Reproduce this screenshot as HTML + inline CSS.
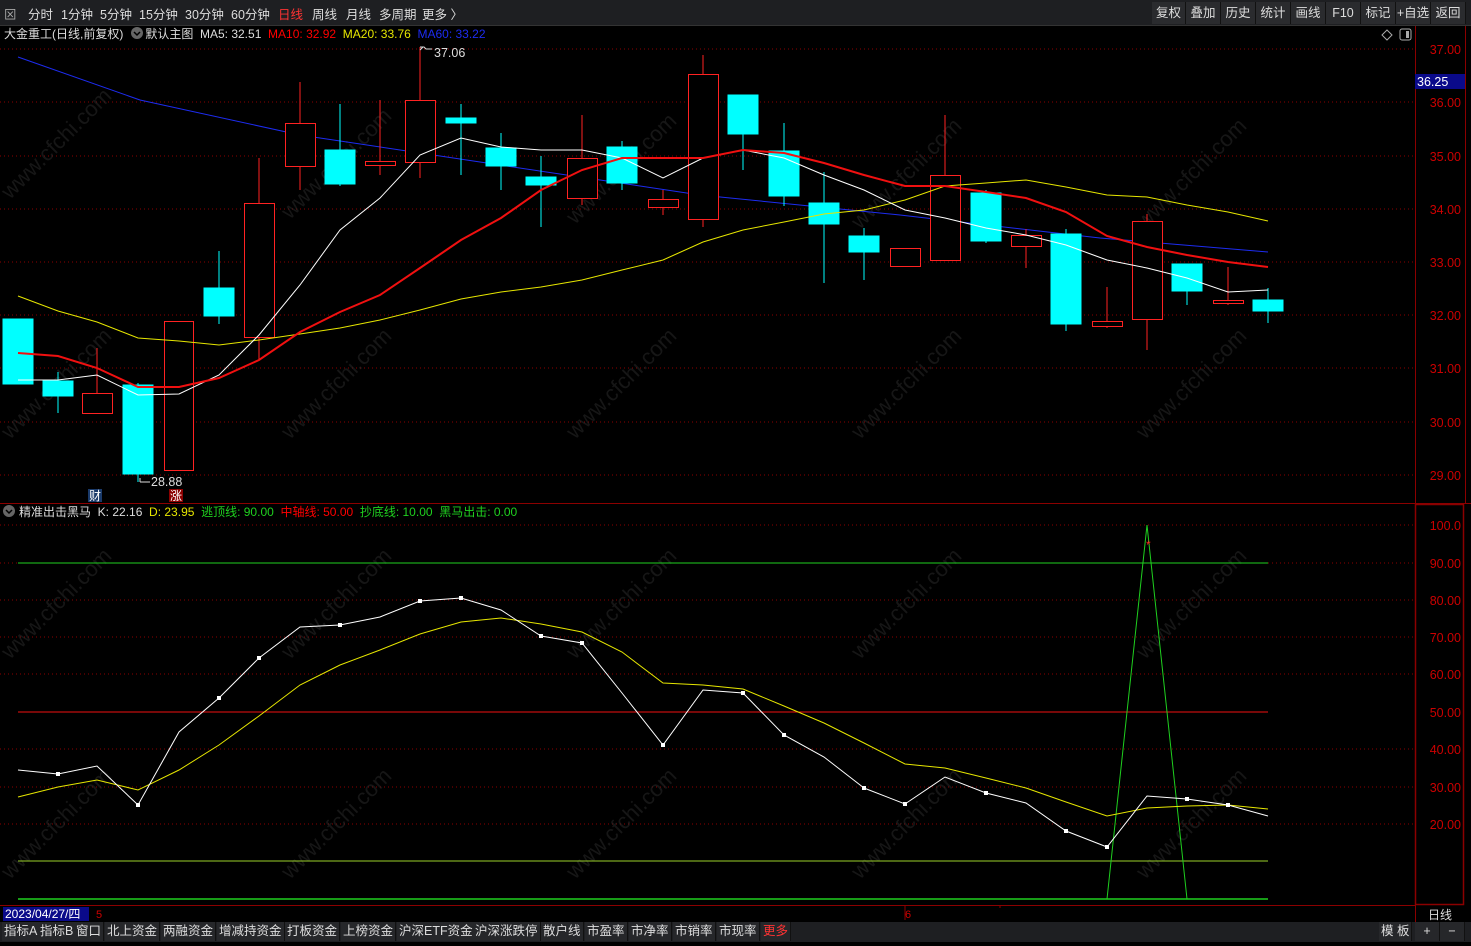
<!DOCTYPE html>
<html><head><meta charset="utf-8"><style>
*{margin:0;padding:0;box-sizing:border-box}
body{width:1471px;height:946px;background:#000;overflow:hidden;font-family:"Liberation Sans","Noto Sans CJK SC",sans-serif;font-size:12px;color:#ddd;position:relative}
.top{position:absolute;left:0;top:0;width:1471px;height:26px;background:#1e1f22;border-bottom:1px solid #333}
.top span{position:absolute;top:4px;font-size:12.5px;color:#ddd}
.rb{position:absolute;top:2px;height:22px;background:#2a2b2e;border-right:1px solid #111;color:#ddd;font-size:12.5px;line-height:22px;text-align:center}
.bot{position:absolute;left:0;top:922px;width:1471px;height:20px;background:#1e1f22}
.bot span{position:absolute;top:0;height:19px;line-height:19px;background:#26272a;font-size:12.5px;color:#ddd;padding:0 2px;border-right:1px solid #111}
svg{position:absolute;left:0;top:0}
</style></head><body>
<div class="top">
<span style="left:4px;color:#aaa">⊠</span>
<span style="left:28px">分时</span><span style="left:61px">1分钟</span><span style="left:100px">5分钟</span><span style="left:139px">15分钟</span><span style="left:185px">30分钟</span><span style="left:231px">60分钟</span><span style="left:278px;color:#f33">日线</span><span style="left:312px">周线</span><span style="left:346px">月线</span><span style="left:379px">多周期</span><span style="left:422px">更多 〉</span>
<div class="rb" style="left:1152px;width:34px">复权</div><div class="rb" style="left:1186px;width:35px">叠加</div><div class="rb" style="left:1221px;width:35px">历史</div><div class="rb" style="left:1256px;width:35px">统计</div><div class="rb" style="left:1291px;width:35px">画线</div><div class="rb" style="left:1326px;width:35px">F10</div><div class="rb" style="left:1361px;width:35px">标记</div><div class="rb" style="left:1396px;width:35px">+自选</div><div class="rb" style="left:1431px;width:35px">返回</div>
</div>
<svg width="1471" height="946" style="top:0">
<g stroke="#8b0000" stroke-width="1" stroke-dasharray="1,3">
<line x1="0" y1="49" x2="1415" y2="49"/><line x1="0" y1="102" x2="1415" y2="102"/><line x1="0" y1="156" x2="1415" y2="156"/><line x1="0" y1="209" x2="1415" y2="209"/><line x1="0" y1="262" x2="1415" y2="262"/><line x1="0" y1="315" x2="1415" y2="315"/><line x1="0" y1="368" x2="1415" y2="368"/><line x1="0" y1="422" x2="1415" y2="422"/><line x1="0" y1="475" x2="1415" y2="475"/>
<line x1="0" y1="525" x2="1415" y2="525"/><line x1="0" y1="563" x2="1415" y2="563"/><line x1="0" y1="600" x2="1415" y2="600"/><line x1="0" y1="637" x2="1415" y2="637"/><line x1="0" y1="674" x2="1415" y2="674"/><line x1="0" y1="749" x2="1415" y2="749"/><line x1="0" y1="787" x2="1415" y2="787"/><line x1="0" y1="824" x2="1415" y2="824"/>
</g>
<g fill="#333" font-size="22" opacity="0.45">
<text transform="translate(10,200) rotate(-45)">www.cfchi.com</text><text transform="translate(290,220) rotate(-45)">www.cfchi.com</text><text transform="translate(575,225) rotate(-45)">www.cfchi.com</text><text transform="translate(860,230) rotate(-45)">www.cfchi.com</text><text transform="translate(1145,230) rotate(-45)">www.cfchi.com</text>
<text transform="translate(10,440) rotate(-45)">www.cfchi.com</text><text transform="translate(290,440) rotate(-45)">www.cfchi.com</text><text transform="translate(575,440) rotate(-45)">www.cfchi.com</text><text transform="translate(860,440) rotate(-45)">www.cfchi.com</text><text transform="translate(1145,440) rotate(-45)">www.cfchi.com</text>
<text transform="translate(10,660) rotate(-45)">www.cfchi.com</text><text transform="translate(290,660) rotate(-45)">www.cfchi.com</text><text transform="translate(575,660) rotate(-45)">www.cfchi.com</text><text transform="translate(860,660) rotate(-45)">www.cfchi.com</text><text transform="translate(1145,660) rotate(-45)">www.cfchi.com</text>
<text transform="translate(10,880) rotate(-45)">www.cfchi.com</text><text transform="translate(290,880) rotate(-45)">www.cfchi.com</text><text transform="translate(575,880) rotate(-45)">www.cfchi.com</text><text transform="translate(860,880) rotate(-45)">www.cfchi.com</text><text transform="translate(1145,880) rotate(-45)">www.cfchi.com</text>
</g>
<polyline fill="none" stroke="#1d2cf0" stroke-width="1" points="18,57 140,100 300,135 500,165 700,195 900,215 1100,238 1268,252"/>
<g stroke="#f22" fill="#000" stroke-width="1">
<line x1="97" y1="348" x2="97" y2="393"/><rect x="82.5" y="393.5" width="30" height="20"/>
<rect x="164.5" y="321.5" width="29" height="149"/>
<line x1="259" y1="158" x2="259" y2="203"/><line x1="259" y1="337" x2="259" y2="360"/><rect x="244.5" y="203.5" width="30" height="134"/>
<line x1="300" y1="82" x2="300" y2="123"/><line x1="300" y1="166" x2="300" y2="190"/><rect x="285.5" y="123.5" width="30" height="43"/>
<line x1="380" y1="100" x2="380" y2="175"/><rect x="365.5" y="161.5" width="30" height="4"/>
<line x1="420" y1="47" x2="420" y2="100"/><line x1="420" y1="162" x2="420" y2="178"/><rect x="405.5" y="100.5" width="30" height="62"/>
<line x1="582" y1="115" x2="582" y2="158"/><line x1="582" y1="198" x2="582" y2="205"/><rect x="567.5" y="158.5" width="30" height="40"/>
<line x1="663" y1="190" x2="663" y2="215"/><rect x="648.5" y="199.5" width="30" height="8"/>
<line x1="703" y1="55" x2="703" y2="74"/><line x1="703" y1="219" x2="703" y2="227"/><rect x="688.5" y="74.5" width="30" height="145"/>
<rect x="890.5" y="248.5" width="30" height="18"/>
<line x1="945" y1="115" x2="945" y2="175"/><rect x="930.5" y="175.5" width="30" height="85"/>
<line x1="1026" y1="229" x2="1026" y2="268"/><rect x="1011.5" y="235.5" width="30" height="11"/>
<line x1="1107" y1="287" x2="1107" y2="328"/><rect x="1092.5" y="321.5" width="30" height="5"/>
<line x1="1147" y1="214" x2="1147" y2="350"/><rect x="1132.5" y="221.5" width="30" height="98"/>
<line x1="1228" y1="267" x2="1228" y2="305"/><rect x="1213.5" y="300.5" width="30" height="3"/>
</g>
<g stroke="#00ffff" fill="#00ffff" stroke-width="1">
<rect x="3" y="319" width="30" height="65"/>
<line x1="58" y1="372" x2="58" y2="413"/><rect x="43" y="381" width="30" height="15"/>
<line x1="138" y1="383" x2="138" y2="482"/><rect x="123" y="385" width="30" height="89"/>
<line x1="219" y1="251" x2="219" y2="324"/><rect x="204" y="288" width="30" height="28"/>
<line x1="340" y1="104" x2="340" y2="186"/><rect x="325" y="150" width="30" height="34"/>
<line x1="461" y1="104" x2="461" y2="175"/><rect x="446" y="118" width="30" height="5"/>
<line x1="501" y1="133" x2="501" y2="190"/><rect x="486" y="148" width="30" height="18"/>
<line x1="541" y1="156" x2="541" y2="227"/><rect x="526" y="177" width="30" height="8"/>
<line x1="622" y1="141" x2="622" y2="190"/><rect x="607" y="147" width="30" height="36"/>
<line x1="743" y1="95" x2="743" y2="170"/><rect x="728" y="95" width="30" height="39"/>
<line x1="784" y1="123" x2="784" y2="206"/><rect x="769" y="151" width="30" height="45"/>
<line x1="824" y1="172" x2="824" y2="283"/><rect x="809" y="203" width="30" height="21"/>
<line x1="864" y1="228" x2="864" y2="280"/><rect x="849" y="236" width="30" height="16"/>
<line x1="986" y1="190" x2="986" y2="243"/><rect x="971" y="193" width="30" height="48"/>
<line x1="1066" y1="229" x2="1066" y2="331"/><rect x="1051" y="234" width="30" height="90"/>
<line x1="1187" y1="264" x2="1187" y2="305"/><rect x="1172" y="264" width="30" height="27"/>
<line x1="1268" y1="288" x2="1268" y2="323"/><rect x="1253" y="300" width="30" height="11"/>
</g>
<polyline fill="none" stroke="#e6e600" stroke-width="1" points="18,296 58,311 97,322 138,338 179,341 219,345 259,340 300,334 340,328 380,320 420,310 461,299 501,292 541,287 582,280 622,270 663,260 703,242 743,230 784,222 824,214 864,210 905,200 945,186 986,183 1026,180 1066,187 1107,195 1147,197 1187,205 1228,212 1268,221"/>
<polyline fill="none" stroke="#fff" stroke-width="1" points="18,380 58,380 97,375 138,395 179,394 219,375 259,335 300,285 340,230 380,198 420,155 461,138 501,147 541,150 582,150 622,158 663,178 703,158 743,150 784,158 824,175 864,190 905,210 945,218 986,228 1026,235 1066,245 1107,260 1147,268 1187,278 1228,292 1268,290"/>
<polyline fill="none" stroke="#f01010" stroke-width="2" points="18,353 58,356 97,368 138,387 179,387 219,378 259,360 300,332 340,312 380,295 420,268 461,240 501,218 541,190 582,170 622,158 663,158 703,158 743,150 784,153 824,163 864,175 905,186 945,186 986,192 1026,198 1066,212 1107,236 1147,247 1187,255 1228,262 1268,267"/>
<path d="M423,47 l-3,3 M420,47 l4,0 l2,2 l6,0" stroke="#ddd" fill="none"/>
<text x="434" y="57" fill="#ddd" font-size="12.5">37.06</text>
<path d="M140,482 l0,-4 M140,482 l10,0" stroke="#ddd" fill="none"/>
<text x="151" y="486" fill="#ddd" font-size="12.5">28.88</text>
<rect x="88" y="489" width="14" height="13" fill="#1a3a6a"/><text x="89" y="500" fill="#fff" font-size="12">财</text>
<rect x="169" y="489" width="14" height="13" fill="#8b0000"/><text x="170" y="500" fill="#fff" font-size="12">涨</text>
<line x1="18" y1="563" x2="1268" y2="563" stroke="#1fd01f"/>
<line x1="18" y1="712" x2="1268" y2="712" stroke="#f01010"/>
<line x1="18" y1="861" x2="1268" y2="861" stroke="#9ad02a"/>
<line x1="18" y1="899" x2="1268" y2="899" stroke="#1fd01f" stroke-width="1.5"/>
<polyline fill="none" stroke="#1fd01f" stroke-width="1" points="1107,899 1147,525 1187,899"/>
<text x="1146" y="549" fill="#f22" font-size="12">*</text>
<polyline fill="none" stroke="#e6e600" stroke-width="1" points="18,797 58,787 97,780 138,790 179,770 219,745 259,716 300,685 340,665 380,650 420,634 461,622 501,618 541,624 582,632 622,652 663,683 703,685 743,689 784,706 824,723 864,743 905,764 945,768 986,778 1026,788 1066,802 1107,816 1147,808 1187,806 1228,805 1268,809"/>
<polyline fill="none" stroke="#fff" stroke-width="1" points="18,770 58,774 97,766 138,805 179,732 219,698 259,658 300,627 340,625 380,617 420,601 461,598 501,610 541,636 582,643 622,693 663,745 703,690 743,693 784,735 824,757 864,788 905,804 945,777 986,793 1026,803 1066,831 1107,847 1147,796 1187,799 1228,805 1268,816"/>
<g fill="#fff"><rect x="56" y="772" width="4" height="4"/><rect x="136" y="803" width="4" height="4"/><rect x="217" y="696" width="4" height="4"/><rect x="257" y="656" width="4" height="4"/><rect x="338" y="623" width="4" height="4"/><rect x="418" y="599" width="4" height="4"/><rect x="459" y="596" width="4" height="4"/><rect x="539" y="634" width="4" height="4"/><rect x="580" y="641" width="4" height="4"/><rect x="661" y="743" width="4" height="4"/><rect x="741" y="691" width="4" height="4"/><rect x="782" y="733" width="4" height="4"/><rect x="862" y="786" width="4" height="4"/><rect x="903" y="802" width="4" height="4"/><rect x="984" y="791" width="4" height="4"/><rect x="1064" y="829" width="4" height="4"/><rect x="1105" y="845" width="4" height="4"/><rect x="1185" y="797" width="4" height="4"/><rect x="1226" y="803" width="4" height="4"/></g>
<line x1="0" y1="503.5" x2="1471" y2="503.5" stroke="#8b0000"/>
<line x1="0" y1="905.5" x2="1415" y2="905.5" stroke="#8b0000"/>
<line x1="1415.5" y1="26" x2="1415.5" y2="922" stroke="#8b0000"/>
<rect x="1415.5" y="504.5" width="48" height="400" fill="none" stroke="#8b0000" stroke-width="1.5"/>
<line x1="1465.5" y1="26" x2="1465.5" y2="503" stroke="#8b0000"/>
<g fill="#c00" font-size="12.5" text-anchor="end">
<text x="1461" y="54">37.00</text><text x="1461" y="107">36.00</text><text x="1461" y="161">35.00</text><text x="1461" y="214">34.00</text><text x="1461" y="267">33.00</text><text x="1461" y="320">32.00</text><text x="1461" y="373">31.00</text><text x="1461" y="427">30.00</text><text x="1461" y="480">29.00</text>
<text x="1461" y="530">100.0</text><text x="1461" y="568">90.00</text><text x="1461" y="605">80.00</text><text x="1461" y="642">70.00</text><text x="1461" y="679">60.00</text><text x="1461" y="717">50.00</text><text x="1461" y="754">40.00</text><text x="1461" y="792">30.00</text><text x="1461" y="829">20.00</text>
</g>
<rect x="1415" y="74" width="50" height="15" fill="#0a0a8a"/><text x="1417" y="86" fill="#fff" font-size="12.5">36.25</text>
<line x1="1000" y1="905" x2="1000" y2="908" stroke="#8b0000"/><line x1="905" y1="905" x2="905" y2="920" stroke="#8b0000"/>
<rect x="3" y="907" width="86" height="14" fill="#0a0a8a"/>
<text x="5" y="918" fill="#fff" font-size="12">2023/04/27/四</text>
<text x="96" y="918" fill="#c00" font-size="11">5</text><text x="905" y="918" fill="#c00" font-size="11">6</text>
<text x="1428" y="919" fill="#ddd" font-size="12">日线</text>
<path d="M1387,30 l5,5 l-5,5 l-5,-5z" fill="none" stroke="#aaa"/>
<rect x="1400" y="29" width="11" height="11" rx="2" fill="none" stroke="#aaa"/><rect x="1406" y="31" width="3" height="7" fill="#aaa"/>
<circle cx="137" cy="33" r="6" fill="#666"/><path d="M134,32 l3,3 l3,-3" stroke="#000" fill="none" stroke-width="1.5"/>
<circle cx="9" cy="511" r="6" fill="#666"/><path d="M6,510 l3,3 l3,-3" stroke="#000" fill="none" stroke-width="1.5"/>
</svg>
<div style="position:absolute;left:4px;top:25px;font-size:12px;white-space:nowrap"><span style="color:#ddd">大金重工(日线,前复权)</span><span style="display:inline-block;width:22px"></span><span style="color:#ddd">默认主图&nbsp; MA5: 32.51</span>&nbsp; <span style="color:#f00">MA10: 32.92</span>&nbsp; <span style="color:#e6e600">MA20: 33.76</span>&nbsp; <span style="color:#1d2cf0">MA60: 33.22</span></div>
<div style="position:absolute;left:19px;top:503px;font-size:12px;white-space:nowrap"><span style="color:#ddd">精准出击黑马&nbsp; K: 22.16</span>&nbsp; <span style="color:#e6e600">D: 23.95</span>&nbsp; <span style="color:#1fd01f">逃顶线: 90.00</span>&nbsp; <span style="color:#f00">中轴线: 50.00</span>&nbsp; <span style="color:#1fd01f">抄底线: 10.00&nbsp; 黑马出击: 0.00</span></div>
<div class="bot">
<span style="left:2px">指标A</span><span style="left:38px">指标B</span><span style="left:74px">窗口</span><span style="left:105px">北上资金</span><span style="left:161px">两融资金</span><span style="left:217px">增减持资金</span><span style="left:285px">打板资金</span><span style="left:341px">上榜资金</span><span style="left:397px">沪深ETF资金</span><span style="left:473px">沪深涨跌停</span><span style="left:541px">散户线</span><span style="left:585px">市盈率</span><span style="left:629px">市净率</span><span style="left:673px">市销率</span><span style="left:717px">市现率</span><span style="left:761px;color:#f33">更多</span>
<span style="left:1379px">模 板</span><span style="left:1415px;width:25px;text-align:center">+</span><span style="left:1440px;width:25px;text-align:center">−</span>
</div>
</body></html>
